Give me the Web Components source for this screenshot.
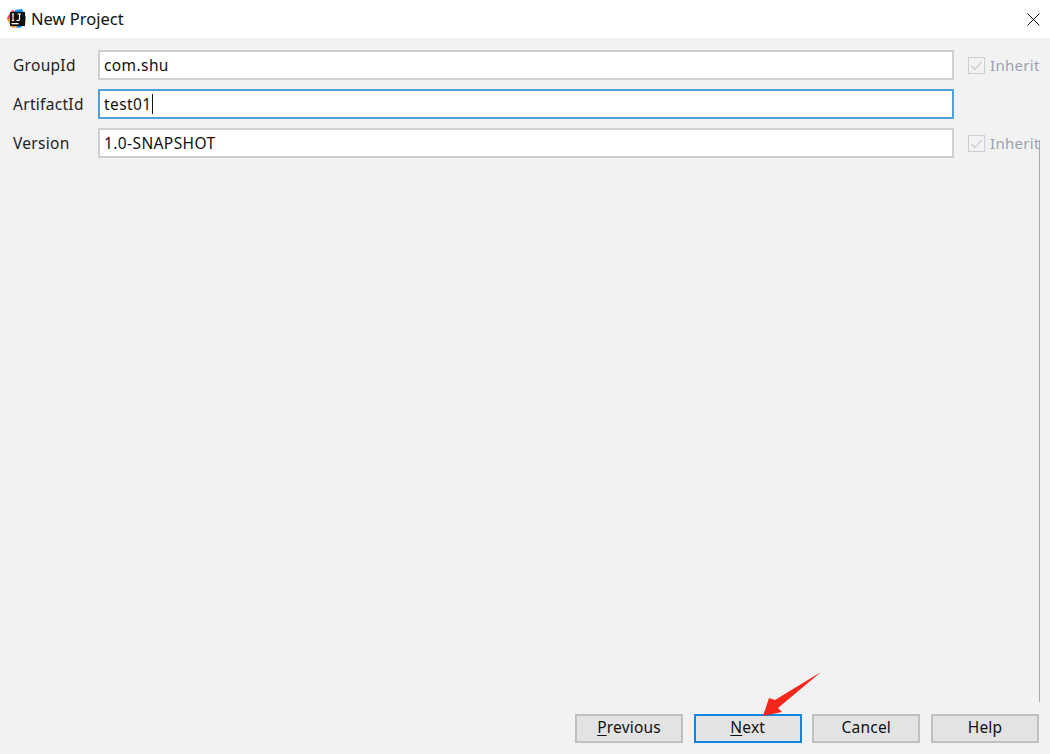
<!DOCTYPE html>
<html>
<head>
<meta charset="utf-8">
<title>New Project</title>
<style>
  html, body { margin: 0; padding: 0; height: 100%; }
  body { font-family: "Noto Sans", "Open Sans", sans-serif; font-size: 15px; color: #1a1a1a; background: #f2f2f2; overflow: hidden; }
</style>
</head>
<body>
<project-dialog>
  <title-bar slot="title">New Project</title-bar>
  <form-row slot="form" label="GroupId" value="com.shu" inherit></form-row>
  <form-row slot="form" label="ArtifactId" value="test01" focused></form-row>
  <form-row slot="form" label="Version" value="1.0-SNAPSHOT" inherit></form-row>
  <dialog-button slot="buttons" mnemonic="P" rest="revious"></dialog-button>
  <dialog-button slot="buttons" mnemonic="N" rest="ext" active></dialog-button>
  <dialog-button slot="buttons" rest="Cancel"></dialog-button>
  <dialog-button slot="buttons" rest="Help"></dialog-button>
</project-dialog>

<script>
class ProjectDialog extends HTMLElement {
  constructor() {
    super();
    this.shadowDOM = this.attachShadow({ mode: 'open' });
  }

  connectedCallback() {
    this.shadowDOM.innerHTML = `
      <style>
        :host { display: flex; flex-direction: column; position: relative; width: 1050px; height: 754px; }
        .form { flex: 1; display: flex; flex-direction: column; gap: 9px; padding: 12px 0 0 0; }
        .buttons { display: flex; justify-content: flex-end; gap: 10.670px; padding: 0 11px 11px 0; }
        .rule { position: absolute; left: 1039px; top: 140px; width: 1px; height: 562px; background: #a9a9a9; }
        .arrow { position: absolute; left: 760px; top: 668px; }
      </style>
      <slot name="title"></slot>
      <div class="form"><slot name="form"></slot></div>
      <div class="buttons"><slot name="buttons"></slot></div>
      <div class="rule"></div>
      <svg class="arrow" width="64" height="50" viewBox="0 0 64 50">
        <path d="M61 4 L15 32 L9 30 L3 48 L22 44 L18 40 Z" fill="#f5261c"/>
      </svg>
    `;
  }
}

class TitleBar extends HTMLElement {
  constructor() {
    super();
    this.shadowDOM = this.attachShadow({ mode: 'open' });
  }

  connectedCallback() {
    this.shadowDOM.innerHTML = `
      <style>
        :host { display: flex; align-items: center; height: 38px; background: #fff; padding-left: 7px; box-sizing: border-box; }
        .logo { flex: none; margin-right: 5px; margin-bottom: 1px; }
        .text { flex: 1; font-size: 16.500px; color: #111; padding-bottom: 2px; }
        .close { flex: none; margin-right: 10px; }
      </style>
      <svg class="logo" width="19" height="20" viewBox="0 0 19 20">
        <path d="M0 9 L5 1 L10 3 L10 16 L3 15 Z" fill="#fb3b62"/>
        <path d="M8 1 L15 0 L19 8 L18 16 L12 19 L7 18 Z" fill="#0a8ff0"/>
        <path d="M0 10 L5 19 L10 18 L7 9 Z" fill="#f7a11f"/>
        <rect x="3" y="3" width="15" height="14" fill="#111"/>
        <rect x="4.500" y="14" width="7" height="1.300" fill="#fff"/>
        <path d="M6 5 V11.500 M4.800 5 H7.200 M4.800 11.500 H7.200 M12.500 5 V10.500 Q12.500 11.500 9.500 11.500 M10.500 5 H14" stroke="#fff" stroke-width="1.200" fill="none"/>
      </svg>
      <span class="text"><slot></slot></span>
      <svg class="close" width="13" height="13" viewBox="0 0 13 13">
        <path d="M.500 .500 L12.500 12.500 M12.500 .500 L.500 12.500" stroke="#111" stroke-width="1"/>
      </svg>
    `;
  }
}

class FormRow extends HTMLElement {
  constructor() {
    super();
    this.shadowDOM = this.attachShadow({ mode: 'open' });
  }

  connectedCallback() {
    const focused = this.hasAttribute('focused');
    this.shadowDOM.innerHTML = `
      <style>
        :host { display: flex; align-items: center; height: 30px; }
        .label { width: 98px; padding-left: 13px; box-sizing: border-box; flex: none; font-size: 15.500px; letter-spacing: .3px; color: #222; }
        .input { width: 856px; height: 30px; box-sizing: border-box; flex: none; background: #fff; border: 2px solid #cfcfcf; display: flex; align-items: center; padding-left: 4px; font-size: 15.500px; letter-spacing: .4px; color: #111; }
        .input.focused { border-color: #4f9fdc; }
        .caret { display: inline-block; width: 1px; height: 20px; background: #111; }
        .inherit { display: flex; align-items: center; margin-left: 14px; color: #9aa1ad; font-size: 15px; letter-spacing: .3px; white-space: nowrap; }
        .box { width: 17px; height: 17px; box-sizing: border-box; border: 1px solid #cdcdcd; background: #f2f2f2; margin-right: 5px; display: block; }
      </style>
      <span class="label">${this.getAttribute('label')}</span>
      <div class="input ${focused ? 'focused' : ''}"><span>${this.getAttribute('value')}</span>${focused ? '<span class="caret"></span>' : ''}</div>
      ${this.hasAttribute('inherit') ? `
      <div class="inherit">
        <svg class="box" viewBox="0 0 15 15"><path d="M2.500 8 L6 11.500 L12.500 4" stroke="#c4c4c4" stroke-width="1.100" fill="none"/></svg>
        Inherit
      </div>` : ''}
    `;
  }
}

class DialogButton extends HTMLElement {
  constructor() {
    super();
    this.shadowDOM = this.attachShadow({ mode: 'open' });
  }

  connectedCallback() {
    const mnemonic = this.getAttribute('mnemonic');
    this.shadowDOM.innerHTML = `
      <style>
        :host { display: flex; align-items: center; justify-content: center; width: 108px; height: 29px; box-sizing: border-box; background: #e3e3e3; border: 2px solid #c0c0c0; padding-bottom: 3px; font-size: 15.500px; letter-spacing: .2px; color: #111; }
        :host([active]) { border-color: #0f86e2; }
        u { text-underline-offset: 2px; text-decoration-thickness: 1px; }
      </style>
      <span>${mnemonic ? `<u>${mnemonic}</u>` : ''}${this.getAttribute('rest')}</span>
    `;
  }
}

customElements.define('project-dialog', ProjectDialog);
customElements.define('title-bar', TitleBar);
customElements.define('form-row', FormRow);
customElements.define('dialog-button', DialogButton);
</script>
</body>
</html>
